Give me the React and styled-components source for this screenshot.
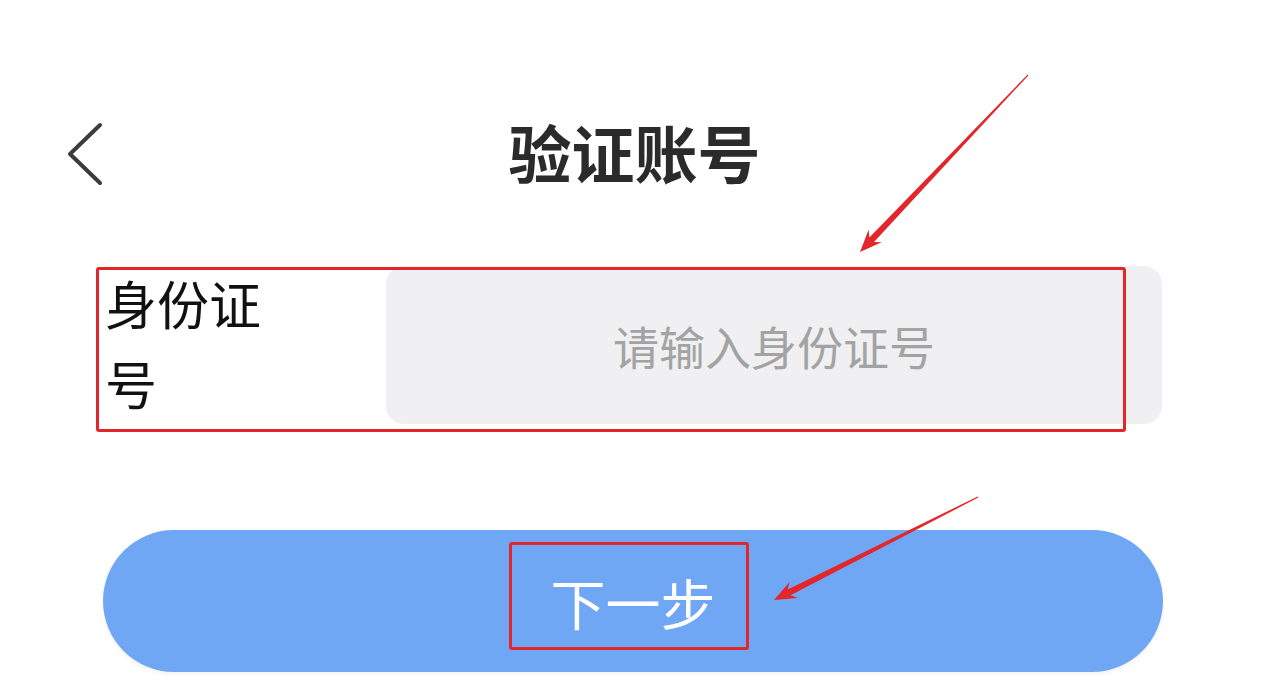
import React from "react";
import styled, { createGlobalStyle } from "styled-components";

const GlobalStyle = createGlobalStyle`
  html, body {
    margin: 0;
    padding: 0;
    background: #ffffff;
  }
  body {
    font-family: "Noto Sans CJK SC", "Noto Sans", sans-serif;
  }
`;

const Page = styled.div`
  position: relative;
  width: 1269px;
  height: 690px;
  overflow: hidden;
  background: #ffffff;
`;

const Header = styled.header`
  display: grid;
  grid-template-columns: 1fr auto 1fr;
  align-items: center;
  height: 120px;
  margin-top: 92px;
`;

const BackButton = styled.button`
  justify-self: start;
  display: flex;
  align-items: center;
  margin-left: 64px;
  margin-top: 4px;
  padding: 0;
  border: 0;
  background: none;
  cursor: pointer;
`;

const Title = styled.h1`
  margin: 0 0 4px;
  font-size: 63px;
  font-weight: 700;
  line-height: 1;
  color: #2b2b2b;
`;

const FormRow = styled.div`
  display: flex;
  align-items: stretch;
  height: 158px;
  margin: 54px 107px 0 105px;
`;

const Label = styled.label`
  flex: 0 0 281px;
  box-sizing: border-box;
  padding-right: 110px;
  font-size: 52px;
  line-height: 80px;
  color: #111111;
  margin-top: -3px;
`;

const Field = styled.input`
  flex: 1;
  min-width: 0;
  box-sizing: border-box;
  border: 0;
  outline: none;
  border-radius: 18px;
  background: #f0f0f2;
  font-family: inherit;
  font-size: 46px;
  text-align: center;
  color: #333333;

  &::placeholder {
    color: #a3a3a3;
  }
`;

const NextButton = styled.button`
  display: flex;
  align-items: center;
  justify-content: center;
  width: 1060px;
  height: 142px;
  margin: 106px 0 0 103px;
  border: 0;
  border-radius: 71px;
  background: #6fa7f4;
  color: #ffffff;
  font-family: inherit;
  font-size: 55px;
  cursor: pointer;
  box-shadow: 0 2px 4px rgba(0, 0, 0, 0.06);
`;

const Overlay = styled.div`
  position: absolute;
  inset: 0;
  pointer-events: none;
`;

const MarkBox = styled.div`
  position: absolute;
  box-sizing: border-box;
  border: 3px solid #e3262b;
  border-radius: 3px;
`;

const ArrowLayer = styled.svg`
  position: absolute;
  inset: 0;
`;

// tapered shaft plus a notched head, from tail to tip
const arrowPoints = (tail, tip, headLen = 22, headHalf = 9) => {
  const dx = tip[0] - tail[0];
  const dy = tip[1] - tail[1];
  const len = Math.hypot(dx, dy);
  const ux = dx / len;
  const uy = dy / len;
  const nx = -uy;
  const ny = ux;
  const bx = tip[0] - ux * headLen;
  const by = tip[1] - uy * headLen;
  const nbx = tip[0] - ux * (headLen - 5);
  const nby = tip[1] - uy * (headLen - 5);
  const pts = [
    [tail[0] + nx * 0.6, tail[1] + ny * 0.6],
    [nbx + nx * 3.2, nby + ny * 3.2],
    [bx + nx * headHalf, by + ny * headHalf],
    tip,
    [bx - nx * headHalf, by - ny * headHalf],
    [nbx - nx * 3.2, nby - ny * 3.2],
    [tail[0] - nx * 0.6, tail[1] - ny * 0.6]
  ];
  return pts.map(p => p[0].toFixed(1) + "," + p[1].toFixed(1)).join(" ");
};

const arrows = [
  { tail: [1028, 75], tip: [860, 252] },
  { tail: [978, 497], tip: [774, 600] }
];

const marks = [
  { left: 96, top: 267, width: 1030, height: 165 },
  { left: 509, top: 542, width: 240, height: 108 }
];

const App = () => (
  <>
    <GlobalStyle />
    <Page>
      <Header>
        <BackButton aria-label="返回">
          <svg width="40" height="64" viewBox="0 0 40 64">
            <path
              d="M36 3 L6 32 L36 61"
              fill="none"
              stroke="#3c3c3c"
              strokeWidth="4"
              strokeLinecap="round"
              strokeLinejoin="round"
            />
          </svg>
        </BackButton>
        <Title>验证账号</Title>
        <span />
      </Header>

      <FormRow>
        <Label htmlFor="idcard">身份证号</Label>
        <Field id="idcard" placeholder="请输入身份证号" />
      </FormRow>

      <NextButton>下一步</NextButton>

      <Overlay>
        {marks.map((m, i) => (
          <MarkBox
            key={i}
            style={{ left: m.left, top: m.top, width: m.width, height: m.height }}
          />
        ))}
        <ArrowLayer width="1269" height="690" viewBox="0 0 1269 690">
          {arrows.map((a, i) => (
            <polygon key={i} points={arrowPoints(a.tail, a.tip)} fill="#e3262b" />
          ))}
        </ArrowLayer>
      </Overlay>
    </Page>
  </>
);

export default App;
